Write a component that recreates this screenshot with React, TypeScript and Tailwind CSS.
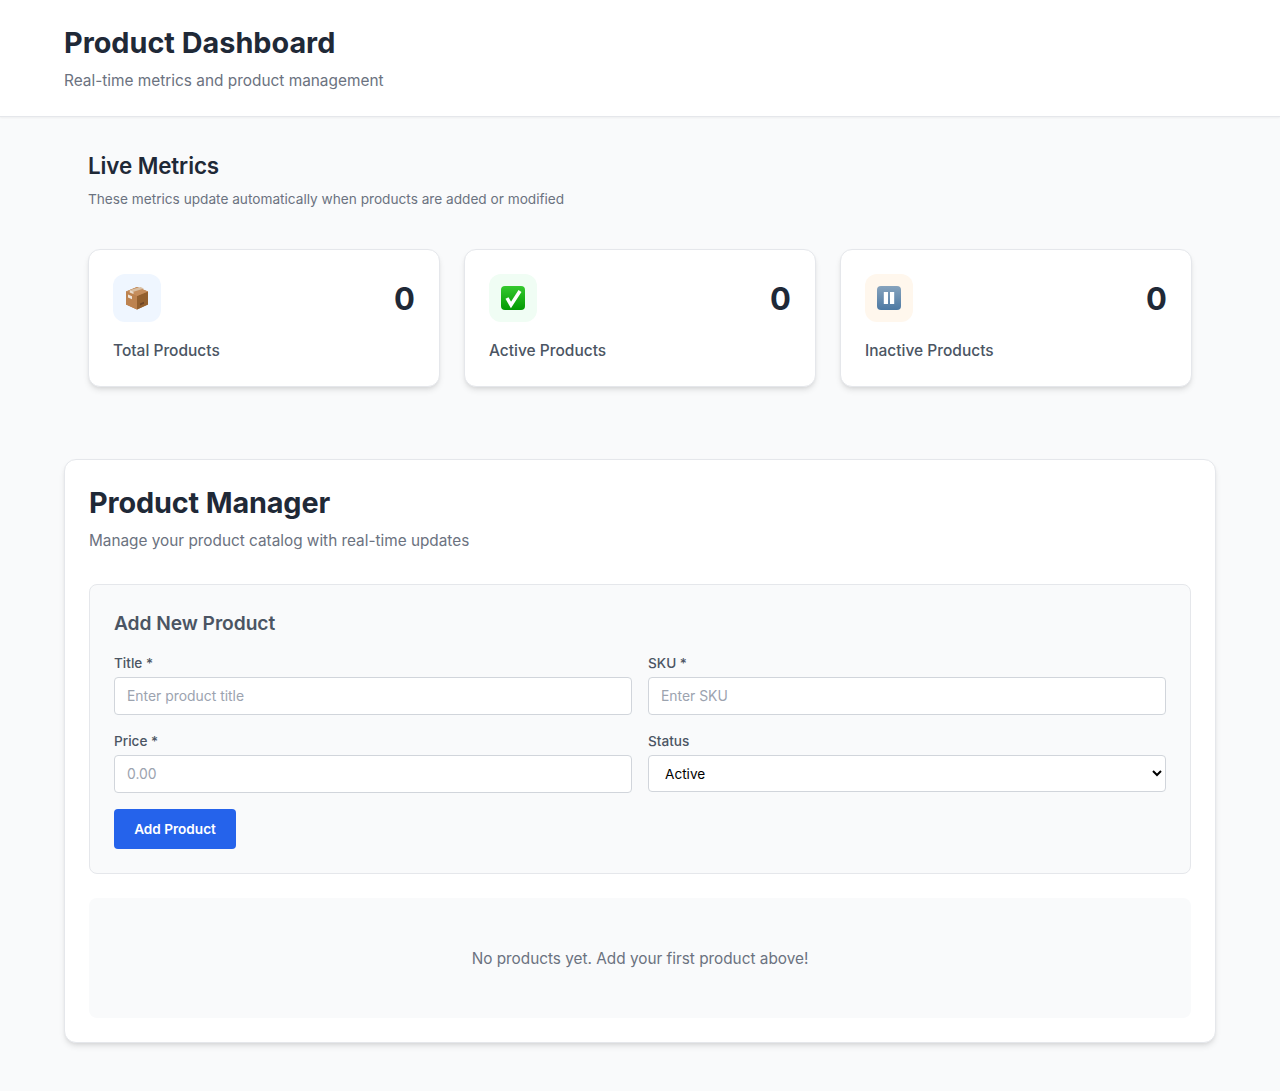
import React from 'react';

const BoxIcon = () => (
  <svg width="24" height="24" viewBox="0 0 24 24">
    <path d="M12 1 23 5.5v13L12 23.5 1 18.5v-13z" fill="#b77b48" />
    <path d="M12 10V23.5L1 18.5V5.5z" fill="#bd8350" />
    <path d="M12 10V23.5L23 18.5V5.5z" fill="#93602f" />
    <path d="M1 5.5 12 1 23 5.5 12 10z" fill="#c58d5c" />
    <path d="M4.8 4 15.5 0.9 19 2.6 8.5 5.8z" fill="#d9bfa3" />
    <path d="M8.5 5.8V8L4.8 6.4V4z" fill="#e9dccd" />
    <path d="M3 8.5 7 10.2v3L3 11.5z" fill="#efe6dc" />
    <path d="M15 17.5l4-1.8v2l-4 1.8z" fill="#6e4526" />
  </svg>
);

const CheckIcon = () => (
  <svg width="24" height="24" viewBox="0 0 24 24">
    <defs>
      <linearGradient id="checkBg" x1="0" y1="0" x2="0" y2="1">
        <stop offset="0" stopColor="#35c92f" />
        <stop offset="1" stopColor="#039a03" />
      </linearGradient>
    </defs>
    <rect x="0" y="0" width="24" height="24" rx="4" fill="url(#checkBg)" />
    <path d="M6 12l4 7L19 5" fill="none" stroke="#fff" strokeWidth="3.5" />
  </svg>
);

const PauseIcon = () => (
  <svg width="24" height="24" viewBox="0 0 24 24">
    <defs>
      <linearGradient id="pauseBg" x1="0" y1="0" x2="0" y2="1">
        <stop offset="0" stopColor="#86a3bd" />
        <stop offset="1" stopColor="#4d79a3" />
      </linearGradient>
    </defs>
    <rect x="0" y="0" width="24" height="24" rx="4" fill="url(#pauseBg)" />
    <rect x="6.8" y="6" width="4.2" height="12" fill="#fff" />
    <rect x="13" y="6" width="4.2" height="12" fill="#fff" />
  </svg>
);

const metrics = [
  { label: 'Total Products', icon: <BoxIcon />, tint: 'bg-[#eff6ff]' },
  { label: 'Active Products', icon: <CheckIcon />, tint: 'bg-[#f0fdf4]' },
  { label: 'Inactive Products', icon: <PauseIcon />, tint: 'bg-[#fff7ed]' },
];

const inputClass =
  'w-full h-[38px] rounded border border-[#d1d5db] bg-white px-3 pb-px text-[13.9px] text-[#1f2937] placeholder:text-[#9ca3af]';

const Field: React.FC<{ label: string; children: React.ReactNode }> = ({ label, children }) => (
  <div className="flex flex-col">
    <label className="mb-1 text-[13.6px] leading-5 font-medium text-[#4b5563]">{label}</label>
    {children}
  </div>
);

export default function App() {
  return (
    <div className="min-h-[1091px] bg-[#f9fafb] font-['Inter',sans-serif]">
      <header className="border-b border-[#e5e7eb] bg-white px-16 pt-[25px] pb-[23px] shadow-xs">
        <h1 className="text-[28.8px] leading-9 font-bold text-[#1f2937]">Product Dashboard</h1>
        <p className="mt-2 text-[15.4px] leading-6 text-[#6b7280]">Real-time metrics and product management</p>
      </header>

      <main className="px-16 pt-8">
        <section className="px-6">
          <h2 className="text-[22.4px] leading-[34px] tracking-[-0.1px] font-semibold text-[#1f2937]">Live Metrics</h2>
          <p className="mt-1.5 text-[13.65px] leading-5 text-[#6b7280]">
            These metrics update automatically when products are added or modified
          </p>
          <div className="mt-10 grid grid-cols-3 gap-6">
            {metrics.map((m) => (
              <div key={m.label} className="rounded-xl border border-[#e5e7eb] bg-white px-6 pt-6 pb-[23px] shadow-md">
                <div className="flex items-center justify-between">
                  <div className={`flex h-12 w-12 items-center justify-center rounded-xl ${m.tint}`}>
                    {m.icon}
                  </div>
                  <span className="pt-0.5 text-[31px] leading-10 font-bold text-[#1f2937]">0</span>
                </div>
                <div className="mt-[17px] text-[15.5px] leading-6 font-medium text-[#4b5563]">{m.label}</div>
              </div>
            ))}
          </div>
        </section>

        <section className="mt-[72px] rounded-xl border border-[#e5e7eb] bg-white px-6 pt-[25px] pb-6 shadow-md">
          <h2 className="text-[28.8px] leading-9 tracking-[-0.13px] font-bold text-[#1f2937]">Product Manager</h2>
          <p className="mt-2 text-[15.33px] leading-6 text-[#6b7280]">
            Manage your product catalog with real-time updates
          </p>

          <div className="mt-[31px] rounded-lg border border-[#e5e7eb] bg-[#f9fafb] p-6">
            <h3 className="text-[19.2px] leading-7 tracking-[-0.05px] font-semibold text-[#4b5563]">Add New Product</h3>
            <div className="mt-4 grid grid-cols-2 gap-x-4 gap-y-4">
              <Field label="Title *">
                <input className={inputClass} placeholder="Enter product title" />
              </Field>
              <Field label="SKU *">
                <input className={inputClass} placeholder="Enter SKU" />
              </Field>
              <Field label="Price *">
                <input className={inputClass} placeholder="0.00" />
              </Field>
              <Field label="Status">
                <select className="h-[37px] w-full rounded border border-[#d1d5db] bg-white px-3 text-[13.6px] text-black">
                  <option>Active</option>
                  <option>Inactive</option>
                </select>
              </Field>
            </div>
            <button className="mt-4 h-10 w-[122px] rounded bg-[#2563eb] text-[13.6px] font-semibold text-white">
              Add Product
            </button>
          </div>

          <div className="mt-6 flex h-[120px] items-center justify-center rounded-lg bg-[#f9fafb] pt-0.5 text-[15.33px] text-[#6b7280]">
            No products yet. Add your first product above!
          </div>
        </section>
      </main>
    </div>
  );
}
